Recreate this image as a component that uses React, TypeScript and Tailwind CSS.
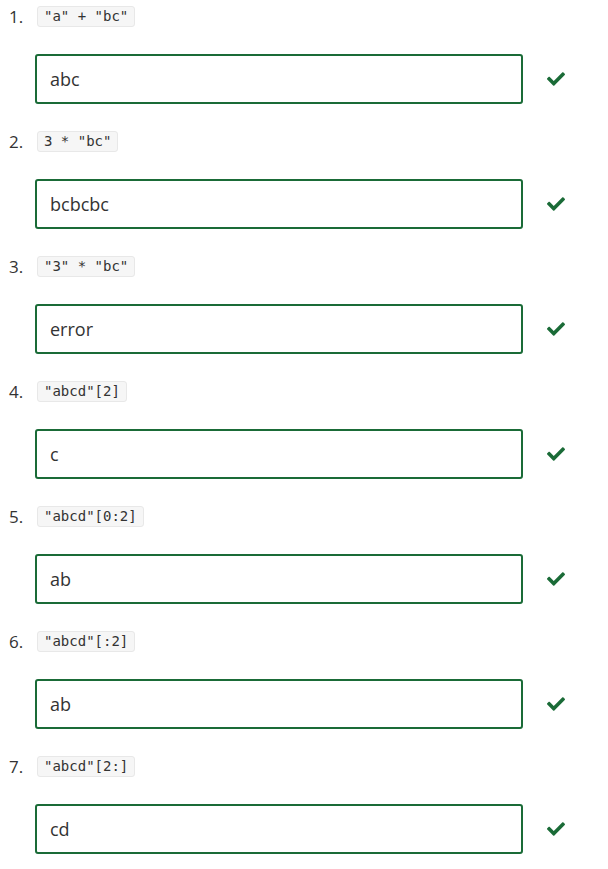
import React from 'react';
import { FaCheck } from 'react-icons/fa';

const questions = [
  { expr: '"a" + "bc"', answer: 'abc' },
  { expr: '3 * "bc"', answer: 'bcbcbc' },
  { expr: '"3" * "bc"', answer: 'error' },
  { expr: '"abcd"[2]', answer: 'c' },
  { expr: '"abcd"[0:2]', answer: 'ab' },
  { expr: '"abcd"[:2]', answer: 'ab' },
  { expr: '"abcd"[2:]', answer: 'cd' },
];

export default function App() {
  return (
    <div className="w-[608px] min-h-[869px] bg-white pt-[6px] text-[#333]" style={{ fontFamily: '"Open Sans", "Noto Sans", sans-serif' }}>
      <ol>
        {questions.map((q, i) => (
          <li key={i} className="h-[125px]">
            {/* Question line */}
            <div className="flex items-center h-[21px]">
              <span className="w-[37px] pl-[9px] text-[17px] leading-none">{i + 1}.</span>
              <code
                className="h-[21px] flex items-center px-[6px] bg-[#f6f6f6] border border-[#e8e8e8] rounded-[3px] text-[14px] whitespace-pre text-[#333]"
                style={{ fontFamily: '"DejaVu Sans Mono", "Liberation Mono", monospace' }}
              >
                {q.expr}
              </code>
            </div>

            {/* Answer line */}
            <div className="flex items-center mt-[27px]">
              <div className="ml-[35px] w-[488px] h-[50px] border-2 border-[#1a6b37] rounded-[3px] flex items-center pl-[13px] text-[18px]">
                {q.answer}
              </div>
              <FaCheck className="ml-[24px] text-[#1a6b37] w-[18px] h-[18px]" />
            </div>
          </li>
        ))}
      </ol>
    </div>
  );
}
